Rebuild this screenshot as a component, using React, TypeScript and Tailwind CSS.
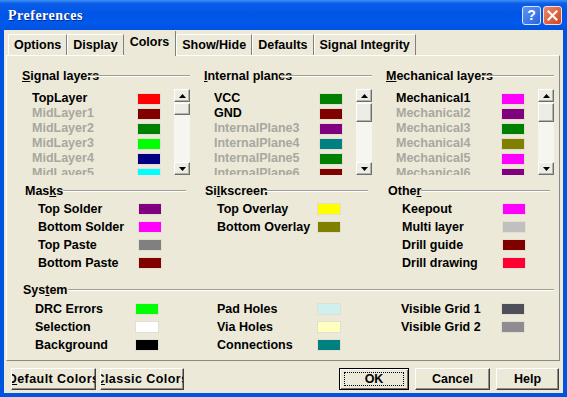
import React from "react";

type Item = { name: string; sw: string; on?: boolean };

const signal: Item[] = [
  { name: "TopLayer", sw: "bg-[#ff0000]", on: true },
  { name: "MidLayer1", sw: "bg-[#800000]" },
  { name: "MidLayer2", sw: "bg-[#008000]" },
  { name: "MidLayer3", sw: "bg-[#00ff00]" },
  { name: "MidLayer4", sw: "bg-[#000080]" },
  { name: "MidLayer5", sw: "bg-[#00ffff]" },
];

const planes: Item[] = [
  { name: "VCC", sw: "bg-[#008000]", on: true },
  { name: "GND", sw: "bg-[#800000]", on: true },
  { name: "InternalPlane3", sw: "bg-[#800080]" },
  { name: "InternalPlane4", sw: "bg-[#008080]" },
  { name: "InternalPlane5", sw: "bg-[#008000]" },
  { name: "InternalPlane6", sw: "bg-[#800000]" },
];

const mech: Item[] = [
  { name: "Mechanical1", sw: "bg-[#ff00ff]", on: true },
  { name: "Mechanical2", sw: "bg-[#800080]" },
  { name: "Mechanical3", sw: "bg-[#008000]" },
  { name: "Mechanical4", sw: "bg-[#808000]" },
  { name: "Mechanical5", sw: "bg-[#ff00ff]" },
  { name: "Mechanical6", sw: "bg-[#800080]" },
];

const masks: Item[] = [
  { name: "Top Solder", sw: "bg-[#800080]" },
  { name: "Bottom Solder", sw: "bg-[#ff00ff]" },
  { name: "Top Paste", sw: "bg-[#808080]" },
  { name: "Bottom Paste", sw: "bg-[#800000]" },
];

const silk: Item[] = [
  { name: "Top Overlay", sw: "bg-[#ffff00]" },
  { name: "Bottom Overlay", sw: "bg-[#808000]" },
];

const other: Item[] = [
  { name: "Keepout", sw: "bg-[#ff00ff]" },
  { name: "Multi layer", sw: "bg-[#c0c0c0]" },
  { name: "Drill guide", sw: "bg-[#800000]" },
  { name: "Drill drawing", sw: "bg-[#ff0030]" },
];

const system: Item[][] = [
  [
    { name: "DRC Errors", sw: "bg-[#00ff00]" },
    { name: "Selection", sw: "bg-[#ffffff]" },
    { name: "Background", sw: "bg-[#000000]" },
  ],
  [
    { name: "Pad Holes", sw: "bg-[#d0f0f0]" },
    { name: "Via Holes", sw: "bg-[#ffffc0]" },
    { name: "Connections", sw: "bg-[#008080]" },
  ],
  [
    { name: "Visible Grid 1", sw: "bg-[#4f4f5c]" },
    { name: "Visible Grid 2", sw: "bg-[#8e8c90]" },
  ],
];

const tabs = ["Options", "Display", "Colors", "Show/Hide", "Defaults", "Signal Integrity"];

// group box caption with the etched line running after it
function GroupTitle({ a, u, b, overlap = "" }: { a: string; u: string; b: string; overlap?: string }) {
  return (
    <div className="flex h-[14px] items-center">
      <span className={`whitespace-nowrap text-[12.5px] font-bold leading-none ${overlap}`}>
        {a}
        <span className="underline">{u}</span>
        {b}
      </span>
      <div className="h-[2px] flex-1 border-t border-b border-t-[#a29f90] border-b-white" />
    </div>
  );
}

function Swatch({ sw }: { sw: string }) {
  return <span className={`block h-[12px] w-[24px] border border-[#e2dfd0] ${sw}`} />;
}

function Arrow({ up }: { up?: boolean }) {
  return (
    <div className="flex h-[13px] w-full items-center justify-center border border-t-white border-l-white border-r-[#6f6f6f] border-b-[#6f6f6f] bg-[#eeede5] shadow-[inset_-1px_-1px_0_#b5b3a8]">
      <svg width="7" height="4" viewBox="0 0 7 4">
        {up ? <path d="M3.5 0 L7 4 L0 4 Z" fill="#000" /> : <path d="M0 0 L7 0 L3.5 4 Z" fill="#000" />}
      </svg>
    </div>
  );
}

function ScrollBar({ thumb }: { thumb: string }) {
  return (
    <div className="ml-auto flex h-full w-[16px] flex-col bg-[#f6f5ef]">
      <Arrow up />
      <div className={`mt-[1px] w-full border border-t-white border-l-white border-r-[#6f6f6f] border-b-[#6f6f6f] bg-[#eeede5] shadow-[inset_-1px_-1px_0_#b5b3a8] ${thumb}`} />
      <div className="flex-1" />
      <Arrow />
    </div>
  );
}

function LayerColumn({
  a,
  u,
  b,
  items,
  thumb,
}: {
  a: string;
  u: string;
  b: string;
  items: Item[];
  thumb: string;
}) {
  return (
    <div className="flex flex-col">
      <GroupTitle a={a} u={u} b={b} overlap="-mr-[12px]" />
      <div className="mt-[6px] flex h-[86px]">
        <div className="ml-[10px] h-full w-[132px] overflow-hidden pt-[2px]">
          {items.map((it) => (
            <div key={it.name} className="flex h-[15px] items-center">
              <span
                className={`w-[105px] whitespace-nowrap text-[12.5px] font-bold leading-none ${
                  it.on ? "text-black" : "text-[#a8a7a0]"
                }`}
              >
                {it.name}
              </span>
              <Swatch sw={it.sw} />
            </div>
          ))}
        </div>
        <ScrollBar thumb={thumb} />
      </div>
    </div>
  );
}

function ColorRows({ items, pad }: { items: Item[]; pad: string }) {
  return (
    <div className="flex flex-col">
      {items.map((it) => (
        <div key={it.name} className={`flex h-[18px] items-center ${pad}`}>
          <span className="w-[100px] whitespace-nowrap text-[12.5px] font-bold leading-none">{it.name}</span>
          <span className="-mt-[1px]">
            <Swatch sw={it.sw} />
          </span>
        </div>
      ))}
    </div>
  );
}

function Button({ label, w, focus, wide }: { label: React.ReactNode; w: string; focus?: boolean; wide?: boolean }) {
  return (
    <div
      className={`flex h-[22px] ${w} items-center justify-center overflow-hidden bg-[#ece9d8] ${
        focus
          ? "border border-black shadow-[inset_1px_1px_0_#fff,inset_-1px_-1px_0_#6f6f6f]"
          : "border border-t-white border-l-white border-r-[#404040] border-b-[#404040] shadow-[inset_-1px_-1px_0_#8f8d84]"
      }`}
    >
      {focus ? (
        <span className="flex h-[14px] w-[calc(100%-8px)] items-center justify-center border border-dotted border-black text-[12.5px] font-bold leading-none">
          {label}
        </span>
      ) : (
        <span
          className={`whitespace-nowrap text-[12.5px] font-bold leading-none ${wide ? "tracking-[0.45px]" : ""}`}
        >
          {label}
        </span>
      )}
    </div>
  );
}

export default function App() {
  return (
    <div className="flex h-[397px] w-[567px] flex-col bg-[#0053e1] font-['Liberation_Sans',Arial,sans-serif] text-black">
      {/* title bar */}
      <div className="flex h-[30px] items-center bg-[linear-gradient(to_bottom,#3d8ff7_0%,#0a5de8_12%,#0055e5_45%,#0058ea_80%,#0051de_100%)] pl-[8px] pr-[5px]">
        <span className="font-['Liberation_Serif',serif] text-[14px] font-bold tracking-[0.5px] text-white [text-shadow:1px_1px_0_#0b2a8c]">
          Preferences
        </span>
        <div className="ml-auto flex gap-[2px]">
          <div className="flex h-[19px] w-[19px] items-center justify-center rounded-[3px] border border-[#dce6fa] bg-[linear-gradient(135deg,#5c95f5,#2a63df)] text-[14px] font-bold leading-none text-white">
            ?
          </div>
          <div className="flex h-[19px] w-[19px] items-center justify-center rounded-[3px] border border-[#f4e0d8] bg-[linear-gradient(135deg,#e88a6a,#d4441e)]">
            <svg width="11" height="11" viewBox="0 0 11 11">
              <path d="M1.5 1.5 L9.5 9.5 M9.5 1.5 L1.5 9.5" stroke="#fff" strokeWidth="2" strokeLinecap="square" />
            </svg>
          </div>
        </div>
      </div>

      {/* client area */}
      <div className="mx-[4px] mb-[4px] flex flex-1 flex-col bg-[#ece9d8]">
        <div className="flex h-[25px] items-end pl-[4px]">
          {tabs.map((t) =>
            t === "Colors" ? (
              <div
                key={t}
                className="relative z-10 -mb-px flex h-[25px] items-start border-r border-r-[#808080] bg-[#ece9d8] px-[6px] pt-[5px] text-[12.5px] font-bold leading-none"
              >
                {t}
              </div>
            ) : (
              <div
                key={t}
                className="flex h-[21px] items-center border-l border-t border-l-white border-t-white border-r border-r-[#808080] px-[5px] text-[12.5px] font-bold leading-none"
              >
                {t}
              </div>
            )
          )}
        </div>

        {/* tab panel */}
        <div className="ml-[2px] mr-[3px] flex flex-1 flex-col border border-t-white border-l-white border-r-[#8a8a8a] border-b-[#8a8a8a] pl-[15px] pt-[13px]">
          <div className="grid grid-cols-[168px_168px_168px] gap-x-[14px]">
            <LayerColumn a="" u="S" b="ignal layers" items={signal} thumb="h-[12px]" />
            <LayerColumn a="" u="I" b="nternal planes" items={planes} thumb="h-[19px]" />
            <LayerColumn a="" u="M" b="echanical layers" items={mech} thumb="h-[19px]" />
          </div>

          <div className="mt-[9px] grid grid-cols-[168px_168px_168px] gap-x-[14px]">
            <div className="pl-[3px] pr-[4px]">
              <GroupTitle a="Mas" u="k" b="s" />
              <div className="mt-[2px]">
                <ColorRows items={masks} pad="pl-[13px]" />
              </div>
            </div>
            <div className="pl-[1px] pr-[4px]">
              <GroupTitle a="Si" u="l" b="kscreen" overlap="-mr-[4px]" />
              <div className="mt-[2px]">
                <ColorRows items={silk} pad="pl-[12px]" />
              </div>
            </div>
            <div className="pl-[2px] pr-[4px]">
              <GroupTitle a="Othe" u="r" b="" />
              <div className="mt-[2px]">
                <ColorRows items={other} pad="pl-[14px]" />
              </div>
            </div>
          </div>

          <div className="mt-[11px] w-[532px] pl-[1px]">
            <GroupTitle a="Sys" u="t" b="em" />
          </div>
          <div className="mt-[3px] grid grid-cols-[168px_168px_168px] gap-x-[14px]">
            <ColorRows items={system[0]} pad="pl-[13px]" />
            <ColorRows items={system[1]} pad="pl-[13px]" />
            <ColorRows items={system[2]} pad="pl-[15px]" />
          </div>
        </div>

        {/* dialog buttons */}
        <div className="flex h-[32px] items-start pl-[7px] pr-[4px] pt-[7px]">
          <div className="flex gap-[4px]">
            <Button
              w="w-[85px]"
              wide
              label={
                <>
                  <span className="underline">D</span>efault Colors
                </>
              }
            />
            <Button
              w="w-[84px]"
              wide
              label={
                <>
                  <span className="underline">C</span>lassic Colors
                </>
              }
            />
          </div>
          <div className="ml-auto flex gap-[6px]">
            <Button w="w-[70px]" label="OK" focus />
            <Button w="w-[75px]" label="Cancel" />
            <Button w="w-[63px]" label="Help" />
          </div>
        </div>
      </div>
    </div>
  );
}
